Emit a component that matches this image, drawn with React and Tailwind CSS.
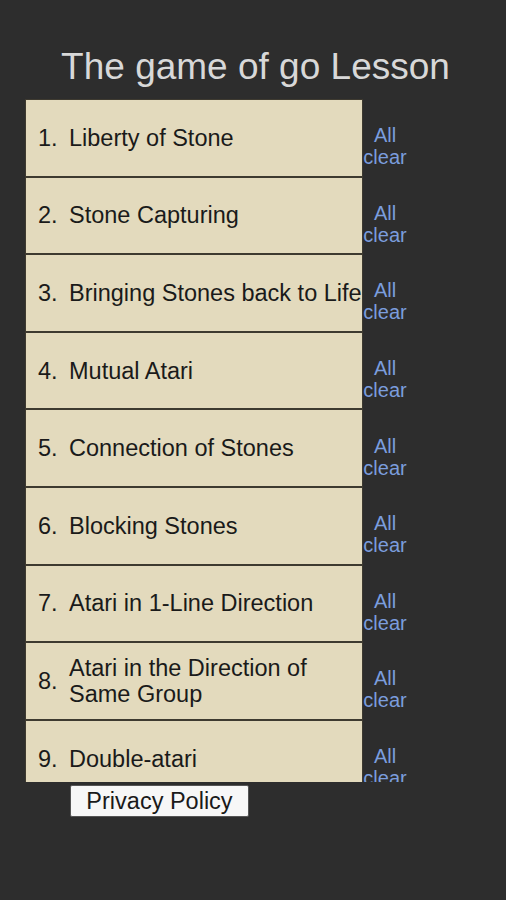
const lessons = [
  ["1.", "Liberty of Stone"],
  ["2.", "Stone Capturing"],
  ["3.", "Bringing Stones back to Life"],
  ["4.", "Mutual Atari"],
  ["5.", "Connection of Stones"],
  ["6.", "Blocking Stones"],
  ["7.", "Atari in 1-Line Direction"],
  ["8.", "Atari in the Direction of\nSame Group"],
  ["9.", "Double-atari"],
];

function LessonRow({ num, title }) {
  return (
    <div className="flex h-[77.6px] shrink-0 items-center">
      <div className="flex h-full w-[338px] shrink-0 items-center overflow-hidden border-[1.5px] border-[#3e3a30] bg-[#e3dabd] pl-[12px] text-[23.5px] leading-[26px] text-[#1a1a1a]">
        <span className="w-[31px] shrink-0">{num}</span>
        <span className="whitespace-pre">{title}</span>
      </div>
      <div className="-ml-[2px] mt-[17px] w-[48px] text-center text-[20px] leading-[22px] text-[#7b9ddd]">
        All
        <br />
        clear
      </div>
    </div>
  );
}

export default function App() {
  return (
    <div
      className="flex h-[900px] w-[506px] flex-col bg-[#2d2d2d]"
      style={{ fontFamily: '"Liberation Sans", Arial, sans-serif' }}
    >
      <h1 className="pl-[5px] pt-[46px] text-center text-[37px] leading-[42px] text-[#d8d8d8]">
        The game of go Lesson
      </h1>
      <div className="ml-[25px] mt-[11px] flex h-[683px] flex-col overflow-hidden">
        {lessons.map(([n, t]) => (
          <LessonRow key={n} num={n} title={t} />
        ))}
      </div>
      <div className="ml-[70px] mt-[3px]">
        <button className="h-[32px] w-[179px] rounded-[2px] border border-[#555] bg-[#f7f7f7] text-[23.5px] leading-[26px] text-[#1a1a1a]">
          Privacy Policy
        </button>
      </div>
    </div>
  );
}
